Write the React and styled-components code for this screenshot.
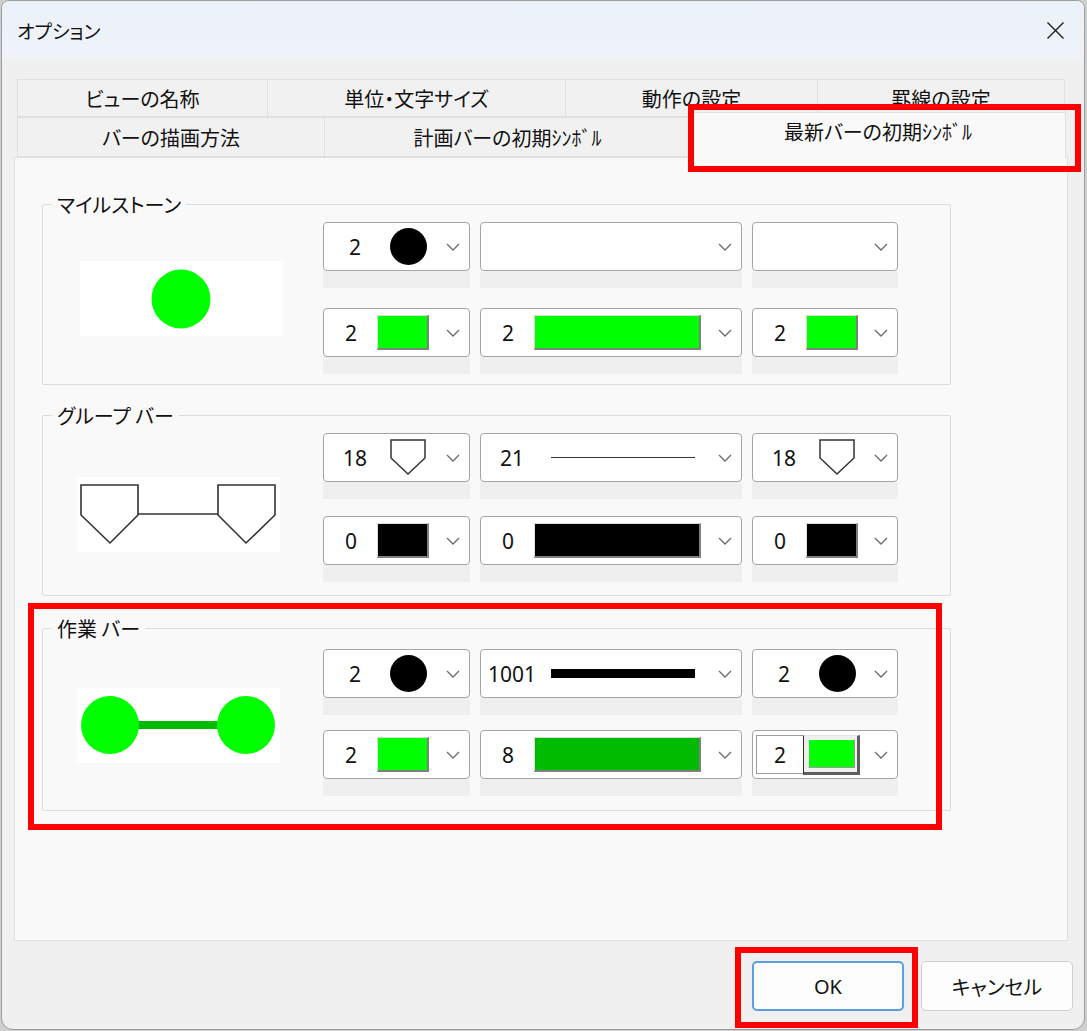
import React from 'react';
import styled, { createGlobalStyle } from 'styled-components';

const JP = `"Noto Sans CJK JP", "Noto Sans", sans-serif`;
const UI = `"Noto Sans", "Noto Sans CJK JP", sans-serif`;

const GlobalStyle = createGlobalStyle`
  html, body { margin: 0; padding: 0; background: #cfcfcf; }
  body { font-family: ${JP}; color: #111; }
  #root { width: 1087px; height: 1031px; }
`;

const Window = styled.div`
  position: relative;
  box-sizing: border-box;
  width: 1084px;
  height: 1030px;
  margin-left: 1px;
  background: #f0f0f0;
  border: 1px solid #9c9c9c;
  border-radius: 8px 8px 12px 12px;
  overflow: hidden;
  display: flex;
  flex-direction: column;
`;

const TitleBar = styled.div`
  flex: 0 0 59px;
  display: flex;
  align-items: center;
  justify-content: space-between;
  padding: 0 19px 0 15px;
  background: linear-gradient(#ebf1f8, #eff3f9);
`;

const Title = styled.div`
  font-family: ${JP};
  font-size: 19px;
  font-feature-settings: "palt";
  color: #111;
`;

const CloseButton = styled.div`
  display: flex;
  align-items: center;
  justify-content: center;
  width: 20px;
  height: 20px;
`;

const Content = styled.div`
  display: flex;
  flex-direction: column;
  padding: 19px 0 0 12px;
`;

const TabStrip = styled.div`
  display: flex;
  flex-direction: column;
  padding-left: 3px;
`;

const TabRow = styled.div`
  display: flex;
  align-items: flex-end;
  height: ${p => p.$h}px;
`;

const Tab = styled.div`
  box-sizing: border-box;
  flex: 0 0 ${p => p.$w}px;
  height: ${p => (p.$active ? 46 : p.$h)}px;
  margin-right: -1px;
  margin-bottom: ${p => (p.$active ? -1 : 0)}px;
  position: relative;
  z-index: ${p => (p.$active ? 2 : 1)};
  display: flex;
  align-items: center;
  justify-content: center;
  padding-bottom: ${p => (p.$active ? 9 : 0)}px;
  background: ${p => (p.$active ? '#f9f9f9' : '#f1f1f1')};
  border: 1px solid #e0e0e0;
  border-bottom: ${p => (p.$active ? 'none' : '1px solid #e0e0e0')};
  font-family: ${JP};
  font-size: 20px;
  font-feature-settings: "palt";
  color: #111;
  white-space: nowrap;
`;

const Panel = styled.div`
  box-sizing: border-box;
  width: 1054px;
  height: 784px;
  background: #f9f9f9;
  border: 1px solid #e0e0e0;
  padding: 46px 0 0 27px;
  display: flex;
  flex-direction: column;
  gap: 30px;
`;

const Group = styled.div`
  position: relative;
  box-sizing: border-box;
  width: 909px;
  margin-top: ${p => p.$mt || 0}px;
  border: 1px solid #dcdcdc;
  border-radius: 2px;
  padding: ${p => p.$pt}px 0 ${p => p.$pb}px 0;
  display: grid;
  grid-template-columns: 280px auto;
`;

const Legend = styled.div`
  position: absolute;
  top: -12px;
  left: 9px;
  padding: 0 5px;
  background: #f9f9f9;
  font-family: ${JP};
  font-size: 20px;
  line-height: 24px;
  font-feature-settings: "palt";
  color: #111;
  white-space: nowrap;
`;

const Preview = styled.div`
  width: 203px;
  height: 75px;
  margin: ${p => p.$top}px 0 0 ${p => p.$left}px;
  background: #ffffff;
  display: flex;
`;

const ComboGrid = styled.div`
  display: grid;
  grid-template-columns: 147px 262px 146px;
  column-gap: 10px;
  row-gap: ${p => p.$rg}px;
`;

const ComboCell = styled.div`
  display: flex;
  flex-direction: column;
`;

const ComboBox = styled.div`
  box-sizing: border-box;
  height: 49px;
  border: 1px solid #a4a4a4;
  border-radius: 4px;
  background: #ffffff;
  display: flex;
  align-items: center;
  padding-right: 9px;
`;

const Band = styled.div`
  height: 17px;
  background: #efefef;
`;

const NumField = styled.div`
  flex: 0 0 48px;
  margin-left: ${p => (p.$tight ? 3 : 7)}px;
  text-align: center;
  font-family: ${UI};
  font-size: 21px;
  line-height: 28px;
  color: #111;
`;

const NumInput = styled.div`
  box-sizing: border-box;
  flex: 0 0 47px;
  height: 39px;
  margin-left: 3px;
  border: 1px solid #9c9c9c;
  border-right: none;
  background: #fff;
  display: flex;
  align-items: center;
  justify-content: center;
  font-family: ${UI};
  font-size: 21px;
  color: #111;
`;

const Visual = styled.div`
  display: flex;
  align-items: center;
  margin-left: ${p => p.$gap}px;
`;

const ChevronWrap = styled.div`
  margin-left: auto;
  display: flex;
  align-items: center;
`;

const Dot = styled.div`
  width: 37px;
  height: 37px;
  border-radius: 50%;
  background: #000;
`;

const Line = styled.div`
  width: 144px;
  height: ${p => p.$h}px;
  background: ${p => p.$c};
`;

const Swatch = styled.div`
  box-sizing: border-box;
  width: ${p => p.$w}px;
  height: 35px;
  background: ${p => p.$c};
  border-top: 1px solid #dcdcdc;
  border-left: 1px solid #dcdcdc;
  border-right: 2px solid #808080;
  border-bottom: 2px solid #808080;
`;

const FocusSwatch = styled.div`
  box-sizing: border-box;
  width: 57px;
  height: 40px;
  background: #f0f0f0;
  border-top: 1px solid #e4e4e4;
  border-left: 1px solid #2a2a2a;
  border-right: 3px solid #5e5e5e;
  border-bottom: 3px solid #5e5e5e;
  padding: 3px 2px 4px 4px;
  display: flex;
`;

const FocusFill = styled.div`
  flex: 1;
  background: #00ff00;
  border-top: 1px solid #fff;
  border-left: 1px solid #fff;
  border-right: 1px solid #9a9a9a;
  border-bottom: 1px solid #9a9a9a;
`;

const Footer = styled.div`
  display: flex;
  justify-content: flex-end;
  gap: 17px;
  padding: 20px 11px 0 0;
`;

const Button = styled.button`
  box-sizing: border-box;
  width: 152px;
  height: 50px;
  border-radius: 5px;
  background: #fdfdfd;
  border: ${p => (p.$primary ? '2px solid #5b9fe3' : '1px solid #d0d0d0')};
  font-family: ${p => (p.$primary ? UI : JP)};
  font-size: 20px;
  font-feature-settings: "palt";
  color: #111;
  padding: 0;
`;

const Highlight = styled.div`
  position: absolute;
  box-sizing: border-box;
  left: ${p => p.$x}px;
  top: ${p => p.$y}px;
  width: ${p => p.$w}px;
  height: ${p => p.$h}px;
  border: 6px solid #ff0000;
  pointer-events: none;
  z-index: 10;
`;

const Chevron = () => (
  <ChevronWrap>
    <svg width="14" height="8" viewBox="0 0 14 8">
      <polyline points="1,1 7,7 13,1" fill="none" stroke="#6a6a6a" strokeWidth="1.3" />
    </svg>
  </ChevronWrap>
);

const Pentagon = () => (
  <svg width="36" height="37" viewBox="0 0 36 37">
    <polygon points="1,1 35,1 35,19 18,35 1,19" fill="#fff" stroke="#333" strokeWidth="1.5" />
  </svg>
);

const Combo = ({ num, kind, children, focused }) => {
  const tight = kind === 'swatch';
  const gap = kind === 'shape' ? 11 : kind === 'line' ? 15 : 2;
  return (
    <ComboCell>
      <ComboBox>
        {num != null &&
          (focused ? <NumInput>{num}</NumInput> : <NumField $tight={tight}>{num}</NumField>)}
        {children && <Visual $gap={focused ? 0 : gap}>{children}</Visual>}
        <Chevron />
      </ComboBox>
      <Band />
    </ComboCell>
  );
};

const MilestonePreview = () => (
  <svg width="203" height="75" viewBox="0 0 203 75">
    <circle cx="101" cy="38" r="29.5" fill="#00ff00" />
  </svg>
);

const GroupPreview = () => (
  <svg width="203" height="75" viewBox="0 0 203 75">
    <g fill="#fff" stroke="#333" strokeWidth="1.6">
      <polygon points="4,8 61,8 61,38 33,66 4,38" />
      <polygon points="141,8 198,8 198,38 169,66 141,38" />
      <line x1="61" y1="37" x2="141" y2="37" />
    </g>
  </svg>
);

const TaskPreview = () => (
  <svg width="203" height="75" viewBox="0 0 203 75">
    <rect x="33" y="33" width="136" height="8" fill="#00bb00" />
    <circle cx="33" cy="37" r="29" fill="#00ff00" />
    <circle cx="169" cy="37" r="29" fill="#00ff00" />
  </svg>
);

const LIME = '#00ff00';

export default function App() {
  return (
    <>
      <GlobalStyle />
      <Window>
        <TitleBar>
          <Title>オプション</Title>
          <CloseButton>
            <svg width="19" height="19" viewBox="0 0 19 19">
              <path d="M1.5 1.5 L17.5 17.5 M17.5 1.5 L1.5 17.5" stroke="#1f1f1f" strokeWidth="1.4" />
            </svg>
          </CloseButton>
        </TitleBar>
        <Content>
          <TabStrip>
            <TabRow $h={38}>
              <Tab $w={251} $h={38}>ビューの名称</Tab>
              <Tab $w={299} $h={38}>単位・文字サイズ</Tab>
              <Tab $w={253} $h={38}>動作の設定</Tab>
              <Tab $w={248} $h={38}>罫線の設定</Tab>
            </TabRow>
            <TabRow $h={40}>
              <Tab $w={308} $h={40}>バーの描画方法</Tab>
              <Tab $w={367} $h={40}>計画バーの初期ｼﾝﾎﾞﾙ</Tab>
              <Tab $w={376} $h={40} $active>最新バーの初期ｼﾝﾎﾞﾙ</Tab>
            </TabRow>
          </TabStrip>
          <Panel>
            <Group $pt={17} $pb={10}>
              <Legend>マイルストーン</Legend>
              <Preview $top={39} $left={37}>
                <MilestonePreview />
              </Preview>
              <ComboGrid $rg={20}>
                <Combo num="2" kind="shape"><Dot /></Combo>
                <Combo />
                <Combo />
                <Combo num="2" kind="swatch"><Swatch $w={52} $c={LIME} /></Combo>
                <Combo num="2" kind="swatch"><Swatch $w={167} $c={LIME} /></Combo>
                <Combo num="2" kind="swatch"><Swatch $w={52} $c={LIME} /></Combo>
              </ComboGrid>
            </Group>
            <Group $pt={17} $pb={13}>
              <Legend>グループ バー</Legend>
              <Preview $top={44} $left={34}>
                <GroupPreview />
              </Preview>
              <ComboGrid $rg={17}>
                <Combo num="18" kind="shape"><Pentagon /></Combo>
                <Combo num="21" kind="line"><Line $h={1.6} $c="#333" /></Combo>
                <Combo num="18" kind="shape"><Pentagon /></Combo>
                <Combo num="0" kind="swatch"><Swatch $w={52} $c="#000" /></Combo>
                <Combo num="0" kind="swatch"><Swatch $w={167} $c="#000" /></Combo>
                <Combo num="0" kind="swatch"><Swatch $w={52} $c="#000" /></Combo>
              </ComboGrid>
            </Group>
            <Group $pt={20} $pb={14} $mt={2}>
              <Legend>作業 バー</Legend>
              <Preview $top={39} $left={34}>
                <TaskPreview />
              </Preview>
              <ComboGrid $rg={15}>
                <Combo num="2" kind="shape"><Dot /></Combo>
                <Combo num="1001" kind="line"><Line $h={9} $c="#000" /></Combo>
                <Combo num="2" kind="shape"><Dot /></Combo>
                <Combo num="2" kind="swatch"><Swatch $w={52} $c={LIME} /></Combo>
                <Combo num="8" kind="swatch"><Swatch $w={167} $c="#00bb00" /></Combo>
                <Combo num="2" kind="swatch" focused>
                  <FocusSwatch><FocusFill /></FocusSwatch>
                </Combo>
              </ComboGrid>
            </Group>
          </Panel>
        </Content>
        <Footer>
          <Button $primary>OK</Button>
          <Button>キャンセル</Button>
        </Footer>
        <Highlight $x={686} $y={103} $w={393} $h={68} />
        <Highlight $x={26} $y={602} $w={914} $h={227} />
        <Highlight $x={733} $y={946} $w={183} $h={81} />
      </Window>
    </>
  );
}
